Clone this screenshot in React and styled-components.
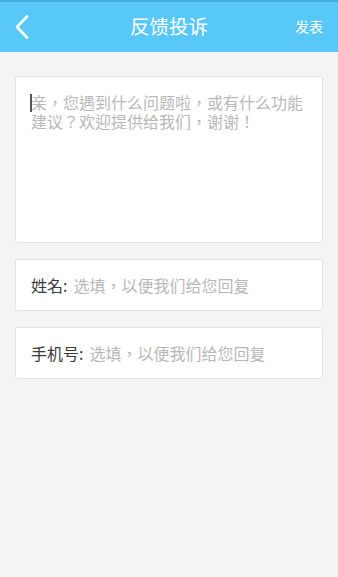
import React from "react";
import styled, { createGlobalStyle } from "styled-components";

const Global = createGlobalStyle`
  html, body { margin: 0; padding: 0; background: #f4f4f4; }
  body { font-family: "Noto Sans CJK TC", "Noto Sans CJK SC", "Noto Sans", sans-serif; }
  * { box-sizing: border-box; }
`;

const Page = styled.div`
  width: 338px;
  min-height: 577px;
  background: #f4f4f4;
  display: flex;
  flex-direction: column;
`;

const Header = styled.header`
  height: 52px;
  background: #58c8f9;
  border-top: 2px solid #45addd;
  display: grid;
  grid-template-columns: 60px 1fr 60px;
  align-items: center;
  color: #fff;
`;

const BackButton = styled.button`
  border: 0;
  background: none;
  padding: 0 0 0 14px;
  height: 100%;
  display: flex;
  align-items: center;
  cursor: pointer;
`;

const Title = styled.h1`
  margin: 0;
  text-align: center;
  font-size: 19.5px;
  font-weight: 400;
  letter-spacing: 0;
  line-height: 1;
  padding-bottom: 2px;
`;

const Publish = styled.button`
  border: 0;
  background: none;
  color: #fff;
  font-family: inherit;
  font-size: 14px;
  text-align: right;
  padding: 0 15px 2px 0;
  cursor: pointer;
`;

const Body = styled.main`
  padding: 24px 15px;
  display: flex;
  flex-direction: column;
  gap: 16px;
`;

const Card = styled.div`
  position: relative;
  background: #fff;
  border: 1px solid #e3e3e3;
  border-radius: 2px;
  height: ${(p) => p.$h}px;
  display: flex;
  align-items: ${(p) => (p.$multi ? "stretch" : "center")};
  padding: ${(p) => (p.$multi ? "16px 16px 0 15px" : "0 15px")};
`;

const TextArea = styled.textarea`
  flex: 1;
  border: 0;
  outline: none;
  resize: none;
  font-family: inherit;
  font-size: 16px;
  line-height: 19px;
  color: #333;
  padding: 0;
  background: transparent;
  &::placeholder { color: #b8b8b8; }
`;

const Caret = styled.span`
  position: absolute;
  left: 14px;
  top: 17px;
  width: 1.5px;
  height: 18px;
  background: #555;
`;

const Label = styled.label`
  font-size: 16px;
  color: #3a3a3a;
  white-space: nowrap;
  margin-right: 6px;
  line-height: 1;
`;

const Input = styled.input`
  flex: 1;
  min-width: 0;
  border: 0;
  outline: none;
  font-family: inherit;
  font-size: 16px;
  color: #333;
  padding: 0;
  background: transparent;
  &::placeholder { color: #b8b8b8; }
`;

export default function App() {
  return (
    <Page>
      <Global />
      <Header>
        <BackButton aria-label="返回">
          <svg width="16" height="24" viewBox="0 0 16 24">
            <path d="M13 1.5 L3 12 L13 22.5" fill="none" stroke="#fff" strokeWidth="2.6" strokeLinecap="round" strokeLinejoin="round" />
          </svg>
        </BackButton>
        <Title>反馈投诉</Title>
        <Publish>发表</Publish>
      </Header>
      <Body>
        <Card $h={167} $multi>
          <Caret />
          <TextArea placeholder="亲，您遇到什么问题啦，或有什么功能建议？欢迎提供给我们，谢谢！" />
        </Card>
        <Card $h={52}>
          <Label>姓名:</Label>
          <Input placeholder="选填，以便我们给您回复" />
        </Card>
        <Card $h={52}>
          <Label>手机号:</Label>
          <Input placeholder="选填，以便我们给您回复" />
        </Card>
      </Body>
    </Page>
  );
}
